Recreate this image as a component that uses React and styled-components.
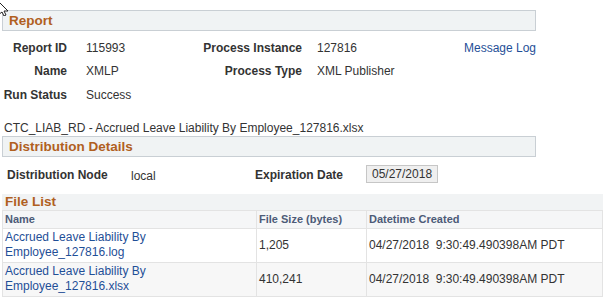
import React from 'react'
import styled, { createGlobalStyle } from 'styled-components'

//Data
const files = [
  { name: 'Accrued Leave Liability By Employee_127816.log', size: '1,205', created: '04/27/2018  9:30:49.490398AM PDT' },
  { name: 'Accrued Leave Liability By Employee_127816.xlsx', size: '410,241', created: '04/27/2018  9:30:49.490398AM PDT' },
];

//Component
function App() {
  return (
    <Page>
      <GlobalStyle />
      <Cursor width="10" height="16" viewBox="0 0 10 16">
        <path d="M-2 1 L8 11 L4 11 L6 15 L4 16 L2 12 L-2 15 Z" fill="#fff" stroke="#222" strokeWidth="1" />
      </Cursor>

      <SectionBar>
        <SectionTitle>Report</SectionTitle>
      </SectionBar>

      <FieldGrid>
        <Label>Report ID</Label>
        <Value $pad={19}>115993</Value>
        <Label>Process Instance</Label>
        <Value $pad={15}>127816</Value>
        <LogLink href="#">Message Log</LogLink>

        <Label>Name</Label>
        <Value $pad={19}>XMLP</Value>
        <Label>Process Type</Label>
        <Value $pad={15}>XML Publisher</Value>
        <span />

        <Label>Run Status</Label>
        <Value $pad={19}>Success</Value>
      </FieldGrid>

      <ReportFile>CTC_LIAB_RD - Accrued Leave Liability By Employee_127816.xlsx</ReportFile>

      <SectionBar>
        <SectionTitle>Distribution Details</SectionTitle>
      </SectionBar>

      <DistRow>
        <DistLabel>Distribution Node</DistLabel>
        <DistValue>local</DistValue>
        <DistLabel $wide>Expiration Date</DistLabel>
        <DateBox>05/27/2018</DateBox>
      </DistRow>

      <FileListBar>
        <SectionTitle>File List</SectionTitle>
      </FileListBar>
      <FileTable>
        <thead>
          <tr>
            <Th style={{ width: 254 }}>Name</Th>
            <Th style={{ width: 110 }}>File Size (bytes)</Th>
            <Th>Datetime Created</Th>
          </tr>
        </thead>
        <tbody>
          {files.map((f, i) => (
            <Row key={f.name} $odd={i % 2 === 1}>
              <Td><Link href="#">{f.name}</Link></Td>
              <Td>{f.size}</Td>
              <Td $pre>{f.created}</Td>
            </Row>
          ))}
        </tbody>
      </FileTable>
    </Page>
  );
}

//Styling
const GlobalStyle = createGlobalStyle`
  body {
    margin: 0;
    background: #fff;
    font-family: Arial, "Liberation Sans", sans-serif;
    font-size: 12px;
    color: #333;
  }
`;

const Page = styled.div`
  position: relative;
  width: 612px;
  height: 297px;
  overflow: hidden;
  padding: 10px 0 0 2px;
  box-sizing: border-box;
`;

const Cursor = styled.svg`
  position: absolute;
  left: 0;
  top: 0;
`;

const SectionBar = styled.div`
  width: 534px;
  height: 21px;
  box-sizing: border-box;
  background: #f0f3f4;
  border: 1px solid #c9cfd4;
  display: flex;
  align-items: center;
  padding-left: 6px;
`;

const SectionTitle = styled.span`
  font-size: 13.5px;
  font-weight: bold;
  color: #b0601f;
`;

const FieldGrid = styled.div`
  display: grid;
  grid-template-columns: 65px 119px 116px 162px auto;
  grid-auto-rows: 23.5px;
  align-items: center;
  margin-top: 5px;
  width: 560px;
`;

const Label = styled.span`
  font-weight: bold;
  text-align: right;
  color: #333;
  white-space: nowrap;
`;

const Value = styled.span`
  color: #333;
  padding-left: ${p => p.$pad || 0}px;
`;

const Link = styled.a`
  color: #1f4f97;
  text-decoration: none;
`;

const LogLink = styled(Link)`
  white-space: nowrap;
`;

const ReportFile = styled.div`
  margin-top: 14px;
  margin-bottom: 1px;
  padding-left: 2px;
  line-height: 14px;
`;

const DistRow = styled.div`
  display: flex;
  align-items: center;
  height: 36px;
  padding-left: 5px;
`;

const DistLabel = styled.span`
  font-weight: bold;
  width: ${p => (p.$wide ? '111px' : '124px')};
`;

const DistValue = styled.span`
  width: 124px;
  padding-top: 2px;
`;

const DateBox = styled.span`
  width: 72px;
  height: 18px;
  box-sizing: border-box;
  background: #efefef;
  border: 1px solid #c6c6c6;
  padding: 1px 0 0 5px;
  line-height: 14px;
  margin-top: -2px;
`;

const FileListBar = styled.div`
  width: 601px;
  height: 16px;
  background: #f1f3f4;
  display: flex;
  align-items: center;
  padding-left: 3px;
  box-sizing: border-box;
  margin-top: 1px;
`;

const FileTable = styled.table`
  width: 601px;
  border-collapse: collapse;
  table-layout: fixed;
`;

const Th = styled.th`
  text-align: left;
  font-size: 11px;
  font-weight: bold;
  color: #4d5b78;
  background: #f5f6f7;
  border: 1px solid #e3e3e3;
  height: 18px;
  padding: 0 2px;
  box-sizing: border-box;
`;

const Row = styled.tr`
  background: ${p => (p.$odd ? '#f7f7f7' : '#fff')};
`;

const Td = styled.td`
  border: 1px solid #e3e3e3;
  height: 33px;
  padding: 0 2px;
  line-height: 15px;
  vertical-align: middle;
  white-space: ${p => (p.$pre ? 'pre' : 'normal')};
  color: #333;
`;

export default App;
